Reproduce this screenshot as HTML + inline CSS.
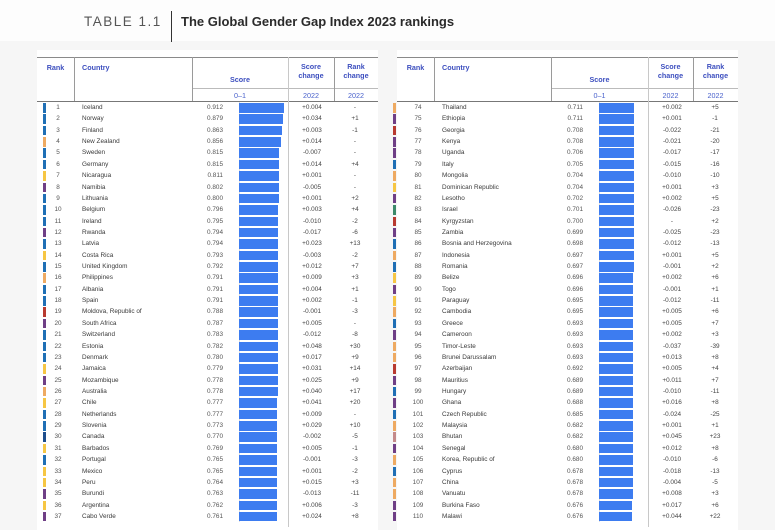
<!DOCTYPE html>
<html><head><meta charset="utf-8"><style>
*{margin:0;padding:0;box-sizing:border-box}
body{width:775px;height:524px;overflow:hidden;background:#f6f6f6;font-family:"Liberation Sans",Arial,sans-serif;position:relative}
#top{position:absolute;left:0;top:0;width:775px;height:41px;background:#fdfdfd}
#t1{position:absolute;left:84px;top:14px;font-size:13.5px;letter-spacing:1.5px;color:#555}
#dv{position:absolute;left:171px;top:11px;width:1px;height:31px;background:#333}
#t2{position:absolute;left:181px;top:14px;font-size:13px;font-weight:bold;color:#2a2a2a}
.tb{position:absolute;top:50px;width:341px;height:480px;background:#fff}
.L{left:37px}.R{left:397px}
.hl{position:absolute;left:0;right:0;height:1px;background:#8a8a8a}
.vl{position:absolute;width:1px;background:#9a9a9a}
.h{position:absolute;font-size:7.2px;font-weight:bold;color:#3d4fbf;text-align:center;line-height:9px}
.sh{position:absolute;font-size:7.2px;color:#4a62cc;text-align:center;top:41px}
.body{position:absolute;left:0;top:52px;width:100%}
p{position:relative;height:11.36px;font-size:6.4px;color:#3a3a3a;line-height:11.36px}
p i{position:absolute;left:6px;top:1px;width:3px;height:9.5px}
.R p i{left:-4px}
p a{position:absolute;left:10px;width:22px;text-align:center;color:#555}
p b{position:absolute;left:45px;font-weight:normal}
p c{position:absolute;left:150px;width:36px;text-align:right;color:#555}
p d{position:absolute;left:202px;top:1px;height:9.5px;background:#3d7cf0;width:calc(var(--s)*49.5px)}
p e{position:absolute;left:255px;width:40px;text-align:center;color:#444}
p f{position:absolute;left:298px;width:40px;text-align:center;color:#444}
.e{background:#1f6fb5}.a{background:#eeaa62}.l{background:#f6c644}.s{background:#6f3f86}.r{background:#b83a30}.n{background:#1d4d8c}.m{background:#3c8a6a}.p{background:#c48a8a}
</style></head><body>
<div id="top"></div>
<div id="t1">TABLE 1.1</div><div id="dv"></div>
<div id="t2">The Global Gender Gap Index 2023 rankings</div>

<div class="tb L">
<div class="hl" style="top:7px"></div>
<div class="hl" style="top:38px;left:155px;background:#bbb"></div>
<div class="hl" style="top:51px;background:#777"></div>
<div class="vl" style="left:37px;top:7px;height:44px"></div>
<div class="vl" style="left:155px;top:7px;height:44px"></div>
<div class="vl" style="left:251px;top:7px;height:470px;background:#c8c8c8"></div>
<div class="vl" style="left:297px;top:7px;height:44px"></div>
<div class="vl" style="left:202px;top:52px;height:420px;background:#e0e0e0"></div>
<div class="h" style="left:0;width:37px;top:13px">Rank</div>
<div class="h" style="left:45px;top:13px">Country</div>
<div class="h" style="left:155px;width:96px;top:25px">Score</div>
<div class="h" style="left:251px;width:46px;top:12px">Score<br>change</div>
<div class="h" style="left:297px;width:44px;top:12px">Rank<br>change</div>
<div class="sh" style="left:155px;width:96px">0–1</div>
<div class="sh" style="left:251px;width:46px">2022</div>
<div class="sh" style="left:297px;width:44px">2022</div>
<div class="body">
<p><i class="e"></i><a>1</a><b>Iceland</b><c>0.912</c><d style="--s:.912"></d><e>+0.004</e><f>-</f></p>
<p><i class="e"></i><a>2</a><b>Norway</b><c>0.879</c><d style="--s:.879"></d><e>+0.034</e><f>+1</f></p>
<p><i class="e"></i><a>3</a><b>Finland</b><c>0.863</c><d style="--s:.863"></d><e>+0.003</e><f>-1</f></p>
<p><i class="a"></i><a>4</a><b>New Zealand</b><c>0.856</c><d style="--s:.856"></d><e>+0.014</e><f>-</f></p>
<p><i class="e"></i><a>5</a><b>Sweden</b><c>0.815</c><d style="--s:.815"></d><e>-0.007</e><f>-</f></p>
<p><i class="e"></i><a>6</a><b>Germany</b><c>0.815</c><d style="--s:.815"></d><e>+0.014</e><f>+4</f></p>
<p><i class="l"></i><a>7</a><b>Nicaragua</b><c>0.811</c><d style="--s:.811"></d><e>+0.001</e><f>-</f></p>
<p><i class="s"></i><a>8</a><b>Namibia</b><c>0.802</c><d style="--s:.802"></d><e>-0.005</e><f>-</f></p>
<p><i class="e"></i><a>9</a><b>Lithuania</b><c>0.800</c><d style="--s:.800"></d><e>+0.001</e><f>+2</f></p>
<p><i class="e"></i><a>10</a><b>Belgium</b><c>0.796</c><d style="--s:.796"></d><e>+0.003</e><f>+4</f></p>
<p><i class="e"></i><a>11</a><b>Ireland</b><c>0.795</c><d style="--s:.795"></d><e>-0.010</e><f>-2</f></p>
<p><i class="s"></i><a>12</a><b>Rwanda</b><c>0.794</c><d style="--s:.794"></d><e>-0.017</e><f>-6</f></p>
<p><i class="e"></i><a>13</a><b>Latvia</b><c>0.794</c><d style="--s:.794"></d><e>+0.023</e><f>+13</f></p>
<p><i class="l"></i><a>14</a><b>Costa Rica</b><c>0.793</c><d style="--s:.793"></d><e>-0.003</e><f>-2</f></p>
<p><i class="e"></i><a>15</a><b>United Kingdom</b><c>0.792</c><d style="--s:.792"></d><e>+0.012</e><f>+7</f></p>
<p><i class="a"></i><a>16</a><b>Philippines</b><c>0.791</c><d style="--s:.791"></d><e>+0.009</e><f>+3</f></p>
<p><i class="e"></i><a>17</a><b>Albania</b><c>0.791</c><d style="--s:.791"></d><e>+0.004</e><f>+1</f></p>
<p><i class="e"></i><a>18</a><b>Spain</b><c>0.791</c><d style="--s:.791"></d><e>+0.002</e><f>-1</f></p>
<p><i class="r"></i><a>19</a><b>Moldova, Republic of</b><c>0.788</c><d style="--s:.788"></d><e>-0.001</e><f>-3</f></p>
<p><i class="s"></i><a>20</a><b>South Africa</b><c>0.787</c><d style="--s:.787"></d><e>+0.005</e><f>-</f></p>
<p><i class="e"></i><a>21</a><b>Switzerland</b><c>0.783</c><d style="--s:.783"></d><e>-0.012</e><f>-8</f></p>
<p><i class="e"></i><a>22</a><b>Estonia</b><c>0.782</c><d style="--s:.782"></d><e>+0.048</e><f>+30</f></p>
<p><i class="e"></i><a>23</a><b>Denmark</b><c>0.780</c><d style="--s:.780"></d><e>+0.017</e><f>+9</f></p>
<p><i class="l"></i><a>24</a><b>Jamaica</b><c>0.779</c><d style="--s:.779"></d><e>+0.031</e><f>+14</f></p>
<p><i class="s"></i><a>25</a><b>Mozambique</b><c>0.778</c><d style="--s:.778"></d><e>+0.025</e><f>+9</f></p>
<p><i class="a"></i><a>26</a><b>Australia</b><c>0.778</c><d style="--s:.778"></d><e>+0.040</e><f>+17</f></p>
<p><i class="l"></i><a>27</a><b>Chile</b><c>0.777</c><d style="--s:.777"></d><e>+0.041</e><f>+20</f></p>
<p><i class="e"></i><a>28</a><b>Netherlands</b><c>0.777</c><d style="--s:.777"></d><e>+0.009</e><f>-</f></p>
<p><i class="e"></i><a>29</a><b>Slovenia</b><c>0.773</c><d style="--s:.773"></d><e>+0.029</e><f>+10</f></p>
<p><i class="n"></i><a>30</a><b>Canada</b><c>0.770</c><d style="--s:.770"></d><e>-0.002</e><f>-5</f></p>
<p><i class="l"></i><a>31</a><b>Barbados</b><c>0.769</c><d style="--s:.769"></d><e>+0.005</e><f>-1</f></p>
<p><i class="e"></i><a>32</a><b>Portugal</b><c>0.765</c><d style="--s:.765"></d><e>-0.001</e><f>-3</f></p>
<p><i class="l"></i><a>33</a><b>Mexico</b><c>0.765</c><d style="--s:.765"></d><e>+0.001</e><f>-2</f></p>
<p><i class="l"></i><a>34</a><b>Peru</b><c>0.764</c><d style="--s:.764"></d><e>+0.015</e><f>+3</f></p>
<p><i class="s"></i><a>35</a><b>Burundi</b><c>0.763</c><d style="--s:.763"></d><e>-0.013</e><f>-11</f></p>
<p><i class="l"></i><a>36</a><b>Argentina</b><c>0.762</c><d style="--s:.762"></d><e>+0.006</e><f>-3</f></p>
<p><i class="s"></i><a>37</a><b>Cabo Verde</b><c>0.761</c><d style="--s:.761"></d><e>+0.024</e><f>+8</f></p>
</div>
</div>

<div class="tb R">
<div class="hl" style="top:7px"></div>
<div class="hl" style="top:38px;left:154px;background:#bbb"></div>
<div class="hl" style="top:51px;background:#777"></div>
<div class="vl" style="left:37px;top:7px;height:44px"></div>
<div class="vl" style="left:154px;top:7px;height:44px"></div>
<div class="vl" style="left:251px;top:7px;height:470px;background:#c8c8c8"></div>
<div class="vl" style="left:296px;top:7px;height:44px"></div>
<div class="vl" style="left:202px;top:52px;height:420px;background:#e0e0e0"></div>
<div class="h" style="left:0;width:37px;top:13px">Rank</div>
<div class="h" style="left:45px;top:13px">Country</div>
<div class="h" style="left:154px;width:97px;top:25px">Score</div>
<div class="h" style="left:251px;width:45px;top:12px">Score<br>change</div>
<div class="h" style="left:296px;width:45px;top:12px">Rank<br>change</div>
<div class="sh" style="left:154px;width:97px">0–1</div>
<div class="sh" style="left:251px;width:45px">2022</div>
<div class="sh" style="left:296px;width:45px">2022</div>
<div class="body">
<p><i class="a"></i><a>74</a><b>Thailand</b><c>0.711</c><d style="--s:.711"></d><e>+0.002</e><f>+5</f></p>
<p><i class="s"></i><a>75</a><b>Ethiopia</b><c>0.711</c><d style="--s:.711"></d><e>+0.001</e><f>-1</f></p>
<p><i class="r"></i><a>76</a><b>Georgia</b><c>0.708</c><d style="--s:.708"></d><e>-0.022</e><f>-21</f></p>
<p><i class="s"></i><a>77</a><b>Kenya</b><c>0.708</c><d style="--s:.708"></d><e>-0.021</e><f>-20</f></p>
<p><i class="s"></i><a>78</a><b>Uganda</b><c>0.706</c><d style="--s:.706"></d><e>-0.017</e><f>-17</f></p>
<p><i class="e"></i><a>79</a><b>Italy</b><c>0.705</c><d style="--s:.705"></d><e>-0.015</e><f>-16</f></p>
<p><i class="a"></i><a>80</a><b>Mongolia</b><c>0.704</c><d style="--s:.704"></d><e>-0.010</e><f>-10</f></p>
<p><i class="l"></i><a>81</a><b>Dominican Republic</b><c>0.704</c><d style="--s:.704"></d><e>+0.001</e><f>+3</f></p>
<p><i class="s"></i><a>82</a><b>Lesotho</b><c>0.702</c><d style="--s:.702"></d><e>+0.002</e><f>+5</f></p>
<p><i class="m"></i><a>83</a><b>Israel</b><c>0.701</c><d style="--s:.701"></d><e>-0.026</e><f>-23</f></p>
<p><i class="r"></i><a>84</a><b>Kyrgyzstan</b><c>0.700</c><d style="--s:.700"></d><e>-</e><f>+2</f></p>
<p><i class="s"></i><a>85</a><b>Zambia</b><c>0.699</c><d style="--s:.699"></d><e>-0.025</e><f>-23</f></p>
<p><i class="e"></i><a>86</a><b>Bosnia and Herzegovina</b><c>0.698</c><d style="--s:.698"></d><e>-0.012</e><f>-13</f></p>
<p><i class="a"></i><a>87</a><b>Indonesia</b><c>0.697</c><d style="--s:.697"></d><e>+0.001</e><f>+5</f></p>
<p><i class="e"></i><a>88</a><b>Romania</b><c>0.697</c><d style="--s:.697"></d><e>-0.001</e><f>+2</f></p>
<p><i class="l"></i><a>89</a><b>Belize</b><c>0.696</c><d style="--s:.696"></d><e>+0.002</e><f>+6</f></p>
<p><i class="s"></i><a>90</a><b>Togo</b><c>0.696</c><d style="--s:.696"></d><e>-0.001</e><f>+1</f></p>
<p><i class="l"></i><a>91</a><b>Paraguay</b><c>0.695</c><d style="--s:.695"></d><e>-0.012</e><f>-11</f></p>
<p><i class="a"></i><a>92</a><b>Cambodia</b><c>0.695</c><d style="--s:.695"></d><e>+0.005</e><f>+6</f></p>
<p><i class="e"></i><a>93</a><b>Greece</b><c>0.693</c><d style="--s:.693"></d><e>+0.005</e><f>+7</f></p>
<p><i class="s"></i><a>94</a><b>Cameroon</b><c>0.693</c><d style="--s:.693"></d><e>+0.002</e><f>+3</f></p>
<p><i class="a"></i><a>95</a><b>Timor-Leste</b><c>0.693</c><d style="--s:.693"></d><e>-0.037</e><f>-39</f></p>
<p><i class="a"></i><a>96</a><b>Brunei Darussalam</b><c>0.693</c><d style="--s:.693"></d><e>+0.013</e><f>+8</f></p>
<p><i class="r"></i><a>97</a><b>Azerbaijan</b><c>0.692</c><d style="--s:.692"></d><e>+0.005</e><f>+4</f></p>
<p><i class="s"></i><a>98</a><b>Mauritius</b><c>0.689</c><d style="--s:.689"></d><e>+0.011</e><f>+7</f></p>
<p><i class="e"></i><a>99</a><b>Hungary</b><c>0.689</c><d style="--s:.689"></d><e>-0.010</e><f>-11</f></p>
<p><i class="s"></i><a>100</a><b>Ghana</b><c>0.688</c><d style="--s:.688"></d><e>+0.016</e><f>+8</f></p>
<p><i class="e"></i><a>101</a><b>Czech Republic</b><c>0.685</c><d style="--s:.685"></d><e>-0.024</e><f>-25</f></p>
<p><i class="a"></i><a>102</a><b>Malaysia</b><c>0.682</c><d style="--s:.682"></d><e>+0.001</e><f>+1</f></p>
<p><i class="p"></i><a>103</a><b>Bhutan</b><c>0.682</c><d style="--s:.682"></d><e>+0.045</e><f>+23</f></p>
<p><i class="s"></i><a>104</a><b>Senegal</b><c>0.680</c><d style="--s:.680"></d><e>+0.012</e><f>+8</f></p>
<p><i class="a"></i><a>105</a><b>Korea, Republic of</b><c>0.680</c><d style="--s:.680"></d><e>-0.010</e><f>-6</f></p>
<p><i class="e"></i><a>106</a><b>Cyprus</b><c>0.678</c><d style="--s:.678"></d><e>-0.018</e><f>-13</f></p>
<p><i class="a"></i><a>107</a><b>China</b><c>0.678</c><d style="--s:.678"></d><e>-0.004</e><f>-5</f></p>
<p><i class="a"></i><a>108</a><b>Vanuatu</b><c>0.678</c><d style="--s:.678"></d><e>+0.008</e><f>+3</f></p>
<p><i class="s"></i><a>109</a><b>Burkina Faso</b><c>0.676</c><d style="--s:.676"></d><e>+0.017</e><f>+6</f></p>
<p><i class="s"></i><a>110</a><b>Malawi</b><c>0.676</c><d style="--s:.676"></d><e>+0.044</e><f>+22</f></p>
</div>
</div>
</body></html>
